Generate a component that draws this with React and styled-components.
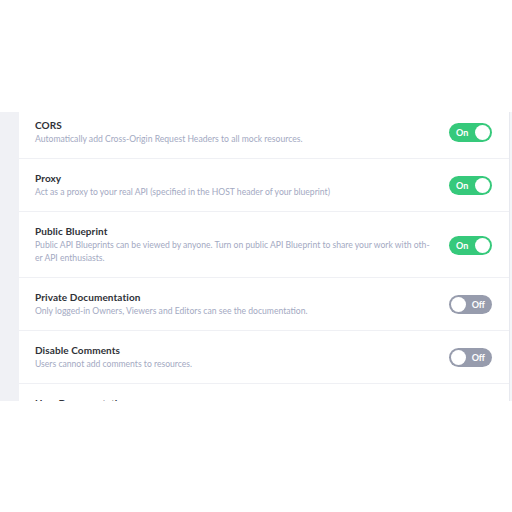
import React from "react";
import styled, { createGlobalStyle } from "styled-components";

const Global = createGlobalStyle`
  html, body { margin: 0; padding: 0; background: #ffffff; }
  body { font-family: "Lato", "Open Sans", sans-serif; -webkit-font-smoothing: antialiased; }
`;

const Page = styled.div`
  width: 512px;
  height: 512px;
  padding-top: 112px;
  box-sizing: border-box;
  background: #ffffff;
`;

const Frame = styled.div`
  display: flex;
  height: 289px;
  overflow: hidden;
`;

const Sidebar = styled.div`
  width: 19px;
  flex: none;
  background: #f0f1f5;
`;

const Content = styled.div`
  flex: 1;
  overflow: hidden;
  border-right: 1px solid #e7e9ef;
`;

const RightStrip = styled.div`
  width: 2px;
  flex: none;
  background: #f4f5f8;
`;

const List = styled.div`
  margin-top: -6px;
`;

const Row = styled.div`
  display: flex;
  align-items: center;
  padding: 13px 17px 12px 16px;
  border-bottom: 1px solid #eff0f4;
`;

const Text = styled.div`
  flex: 1;
  min-width: 0;
`;

const Title = styled.div`
  font-size: 10px;
  line-height: 13px;
  font-weight: 700;
  color: #2f3137;
  margin-bottom: 1px;
  letter-spacing: 0.1px;
`;

const Desc = styled.div`
  font-size: 8.6px;
  line-height: 13px;
  color: #a3a9c2;
  white-space: nowrap;
`;

const Toggle = styled.div`
  flex: none;
  width: 43px;
  height: 19px;
  border-radius: 10px;
  background: ${(p) => (p.$on ? "#36c97b" : "#979cad")};
  display: flex;
  align-items: center;
  flex-direction: ${(p) => (p.$on ? "row" : "row-reverse")};
  justify-content: space-between;
  padding: ${(p) => (p.$on ? "0 2px 0 7px" : "0 7px 0 2px")};
  box-sizing: border-box;
  margin-left: 16px;
`;

const ToggleLabel = styled.span`
  font-size: 9px;
  font-weight: 700;
  color: #ffffff;
`;

const Knob = styled.span`
  width: 15px;
  height: 15px;
  border-radius: 50%;
  background: #ffffff;
`;

const settings = [
  { title: "CORS", desc: ["Automatically add Cross-Origin Request Headers to all mock resources."], on: true },
  { title: "Proxy", desc: ["Act as a proxy to your real API (specified in the HOST header of your blueprint)"], on: true },
  {
    title: "Public Blueprint",
    desc: [
      "Public API Blueprints can be viewed by anyone. Turn on public API Blueprint to share your work with oth-",
      "er API enthusiasts.",
    ],
    on: true,
  },
  { title: "Private Documentation", desc: ["Only logged-in Owners, Viewers and Editors can see the documentation."], on: false },
  { title: "Disable Comments", desc: ["Users cannot add comments to resources."], on: false },
  { title: "User Documentation", desc: ["Show documentation to users of your API."], on: true },
];

export default function App() {
  return (
    <Page>
      <Global />
      <Frame>
        <Sidebar />
        <Content>
          <List>
            {settings.map((s) => (
              <Row key={s.title}>
                <Text>
                  <Title>{s.title}</Title>
                  {s.desc.map((d) => (
                    <Desc key={d}>{d}</Desc>
                  ))}
                </Text>
                <Toggle $on={s.on}>
                  <ToggleLabel>{s.on ? "On" : "Off"}</ToggleLabel>
                  <Knob />
                </Toggle>
              </Row>
            ))}
          </List>
        </Content>
        <RightStrip />
      </Frame>
    </Page>
  );
}
